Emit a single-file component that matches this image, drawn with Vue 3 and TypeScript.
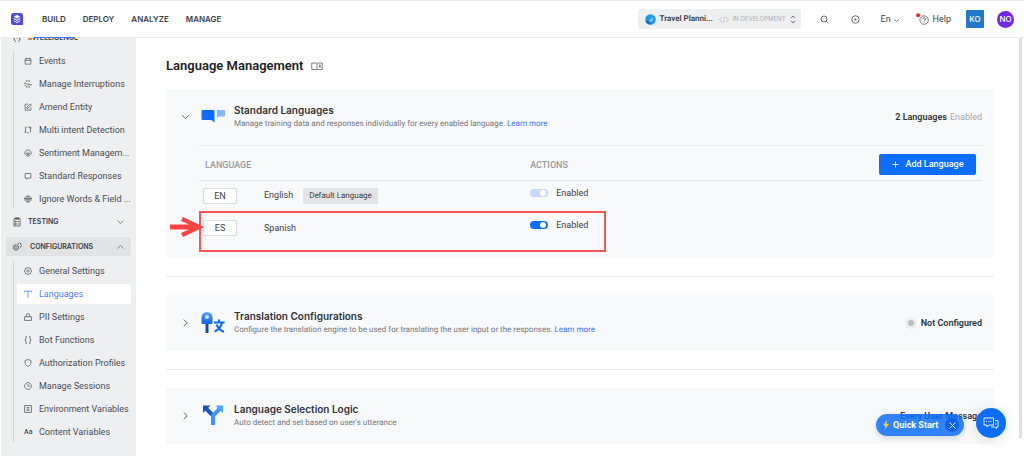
<script setup lang="ts">
import { ref } from 'vue'

interface NavItem {
  label: string
  icon: string
  active?: boolean
}

interface LanguageRow {
  code: string
  name: string
  isDefault: boolean
  enabled: boolean
}

const tabs = ['BUILD', 'DEPLOY', 'ANALYZE', 'MANAGE']

const intelligence: NavItem[] = [
  { label: 'Events', icon: 'M2 3h10v9.500H2zM2 6h10M4.500 1v2M9.500 1v2' },
  { label: 'Manage Interruptions', icon: 'M5 0v3.500M9 0v3.500M0 5.500h3.500l2 3H9M1 9.500h2.500M8 5.500l2 3h4M5 10.500V14M9 10.500V14' },
  { label: 'Amend Entity', icon: 'M7 2H2v10.500h10V8M5 9.500V7.500L11 1.500l1.800 1.800L7 9.500z' },
  { label: 'Multi intent Detection', icon: 'M5 2H2.500v9.500M1 10l1.500 1.800L4 10M7 2h4.500v9M10 4l1.500-2L13 4M9 12H5.500' },
  { label: 'Sentiment Managem...', icon: 'M7 1.500a5.500 5.500 0 1 0 .01 0M4.500 5.500h1.500M8 5.500h1.500M4.500 8c1 3 4 3 5 0z' },
  { label: 'Standard Responses', icon: 'M2 2.500h10v8H6.500l-2 2v-2H2z' },
  { label: 'Ignore Words & Field ...', icon: 'M7 1.500a5.500 5.500 0 1 0 .01 0M0 6h14M3 8.500h8M4 3.500h6M5 6v2.500M9 6v2.500M7 9v4' },
]

const configurations: NavItem[] = [
  { label: 'General Settings', icon: 'M7 .5l1.800 1.700 2.600-.2.400 2.500 1.700 2.500-1.700 2.500-.4 2.500-2.600-.2L7 13.500l-1.800-1.700-2.600.2-.4-2.500L.5 7l1.700-2.500.4-2.500 2.600.2zM7 5a2 2 0 1 0 .01 0' },
  { label: 'Languages', icon: 'M1 4V2h12v2M7 2v11.500', active: true },
  { label: 'PII Settings', icon: 'M1 6.500h12V13H1zM4 6.500V4a3 3 0 0 1 6 0v2.500' },
  { label: 'Bot Functions', icon: 'M5 .5H3.500v5L1.500 7l2 1.500v5H5M9 .5h1.500v5l2 1.500-2 1.500v5H9' },
  { label: 'Authorization Profiles', icon: 'M7 1L12 2.500v5C12 10.500 9 12 7 13 5 12 2 10.500 2 7.500v-5z' },
  { label: 'Manage Sessions', icon: 'M7 1a6 6 0 1 0 .01 0M7 3.500V7.500h3.500' },
  { label: 'Environment Variables', icon: 'M1 1h12v12H1zM4.500 4.500h5M4.500 7h5M4.500 9.500h5' },
  { label: 'Content Variables', icon: '' },
]

const languages = ref<LanguageRow[]>([
  { code: 'EN', name: 'English', isDefault: true, enabled: true },
  { code: 'ES', name: 'Spanish', isDefault: false, enabled: true },
])

const locale = ref('En')
const quickStart = ref(true)
</script>

<template>
  <div class="page">
    <header class="topbar">
      <svg class="logo" viewBox="0 0 26 26" aria-hidden="true">
        <path d="M5 0h16a5 5 0 0 1 5 5v21H5a5 5 0 0 1-5-5V5a5 5 0 0 1 5-5z" fill="#4f4be0" />
        <path d="M13 4l7 4-7 4-7-4z" fill="#fff" />
        <path d="M6 10.500l7 4 7-4v3l-7 4-7-4zM6 15.500l7 4 7-4v2.500l-7 4-7-4z" fill="#e4e4fb" />
      </svg>
      <nav class="tabs" aria-label="Main">
        <a v-for="tab in tabs" :key="tab" href="#" class="tab" :class="{ current: tab === 'BUILD' }">{{ tab }}</a>
      </nav>
      <div class="tools">
        <button class="app-picker" type="button" aria-haspopup="listbox">
          <svg class="app-icon" viewBox="0 0 22 22" aria-hidden="true">
            <circle cx="11" cy="11" r="10.500" fill="#2196f3" />
            <path d="M8 13l9-7-2 8-4 2z" fill="#90cdf9" />
            <path d="M1 14c4-2 9 0 12 6-5 2-10-1-12-6z" fill="#1769c0" />
          </svg>
          <span class="app-name">Travel Planni...</span>
          <svg class="code-icon" viewBox="0 0 20 14" aria-hidden="true"><path d="M6 2L1 7l5 5M14 2l5 5-5 5M11.500 1l-3 12" /></svg>
          <span class="stage">IN DEVELOPMENT</span>
          <svg class="updown" viewBox="0 0 12 18" aria-hidden="true"><path d="M2 6.500L6 2l4 4.500M2 11.500L6 16l4-4.500" /></svg>
        </button>
        <button class="icon-btn search" type="button" aria-label="Search">
          <svg viewBox="0 0 18 18"><circle cx="8" cy="8" r="6" /><path d="M12.500 12.500L16.500 16.500" /></svg>
        </button>
        <button class="icon-btn target" type="button" aria-label="Explore">
          <svg viewBox="0 0 18 18"><circle cx="9" cy="9" r="7.500" /><circle class="solid" cx="9" cy="9" r="2" /></svg>
        </button>
        <span class="locale">
          <select v-model="locale" aria-label="Interface language">
            <option>En</option>
            <option>Es</option>
          </select>
          <svg viewBox="0 0 10 6" aria-hidden="true"><path d="M1 1l4 4 4-4" /></svg>
        </span>
        <button class="help" type="button">
          <svg viewBox="0 0 24 22" aria-hidden="true">
            <circle cx="15" cy="13" r="7.800" />
            <path d="M12.500 11c0-3.500 5-3.500 5 0 0 2-2.500 2-2.500 3.800M15 16.500v1.500" />
            <circle class="alert" cx="4" cy="4" r="3.800" />
          </svg>
          Help
        </button>
        <button class="workspace" type="button">KO</button>
        <button class="avatar" type="button">NO</button>
      </div>
    </header>

    <div class="body">
      <aside class="sidebar">
        <div class="scrolled">
          <button class="group intel" type="button">
            <svg class="group-icon" viewBox="0 0 18 18"><path d="M4 2v11l3 3M14 2v11l-3 3M9 2v8" /></svg>
            <span>INTELLIGENCE</span>
          </button>
          <ul class="items">
            <li v-for="item in intelligence" :key="item.label">
              <a href="#" class="item">
                <svg viewBox="0 0 14 14" aria-hidden="true"><path :d="item.icon" /></svg>
                <span>{{ item.label }}</span>
              </a>
            </li>
          </ul>
          <button class="group" type="button">
            <svg class="group-icon" viewBox="0 0 18 20"><path d="M3 3h12v15H3zM6 1.500h6v3H6zM5.500 8h2v2h-2zM5.500 13h2v2h-2zM10 9h3M10 14h3" /></svg>
            <span>TESTING</span>
            <svg class="caret" viewBox="0 0 14 8"><path d="M1 1l6 6 6-6" /></svg>
          </button>
          <button class="group open" type="button">
            <svg class="group-icon" viewBox="0 0 20 20">
              <path d="M8 5l1.500 1.500 2-.2.500 2 1.800 1-.8 1.700.8 1.800-1.800 1-.5 2-2-.2L8 17l-1.500-1.400-2 .2-.5-2-1.800-1L3 11l-.8-1.800 1.800-1 .5-2 2 .2zM8 8.500a2.500 2.500 0 1 0 .01 0M11 4.500l1-2 1.500.5 1.500-1.500L16 3l2 .2v2l1.300 1.300L18 8l.2 2-2 .3" />
            </svg>
            <span>CONFIGURATIONS</span>
            <svg class="caret" viewBox="0 0 14 8"><path d="M1 7l6-6 6 6" /></svg>
          </button>
          <ul class="items config">
            <li v-for="item in configurations" :key="item.label">
              <a href="#" class="item" :class="{ active: item.active }">
                <svg v-if="item.icon" viewBox="0 0 14 14" aria-hidden="true"><path :d="item.icon" /></svg>
                <span v-else class="aa" aria-hidden="true">Aa</span>
                <span>{{ item.label }}</span>
              </a>
            </li>
          </ul>
        </div>
      </aside>

      <main class="main">
        <h1>
          Language Management
          <svg viewBox="0 0 24 18" aria-hidden="true"><path d="M12 4c-1-2-2-2-4-2H1.500v13H9c1.500 0 2.500.5 3 1.500.5-1 1.500-1.500 3-1.500h7.500V2H16c-2 0-3 0-4 2zM12 4v12M16 6h3M16 9h3M18 6v6" /></svg>
        </h1>

        <section class="panel">
          <div class="panel-head">
            <button class="toggle" type="button" aria-label="Collapse Standard Languages" aria-expanded="true">
              <svg viewBox="0 0 16 16"><path d="M2 4l6 6 6-6" /></svg>
            </button>
            <svg class="emblem" viewBox="0 0 48 48" aria-hidden="true">
              <path d="M3 10h22a2 2 0 0 1 2 2v23l-6-5H3a2 2 0 0 1-2-2V12a2 2 0 0 1 2-2z" fill="#0d6efd" />
              <path d="M33 10h13a2 2 0 0 1 2 2v9a2 2 0 0 1-2 2H36l-4 3V11z" fill="#86b6fe" />
            </svg>
            <div class="titles">
              <h2>Standard Languages</h2>
              <p>Manage training data and responses individually for every enabled language. <a href="#">Learn more</a></p>
            </div>
            <div class="status"><strong>2 Languages</strong> <span class="muted">Enabled</span></div>
          </div>
          <div class="panel-body">
            <table>
              <colgroup>
                <col class="c-code" />
                <col class="c-name" />
                <col />
                <col class="c-add" />
              </colgroup>
              <thead>
                <tr>
                  <th colspan="2" scope="col" class="first">LANGUAGE</th>
                  <th scope="col">ACTIONS</th>
                  <td class="add-cell">
                    <button class="add" type="button">
                      <svg viewBox="0 0 14 14" aria-hidden="true"><path d="M7 1v12M1 7h12" /></svg>
                      Add Language
                    </button>
                  </td>
                </tr>
              </thead>
              <tbody>
                <tr v-for="row in languages" :key="row.code">
                  <td class="code-cell">
                    <span class="code">{{ row.code }}</span>
                    <span v-if="row.code === 'ES'" class="frame" aria-hidden="true"></span>
                    <svg v-if="row.code === 'ES'" class="arrow" viewBox="0 0 34 20" aria-hidden="true">
                      <path d="M0 7.500h19l-8-3.500L13 0l21 10-21 10-2-4 8-3.500H0z" fill="#fb4343" />
                    </svg>
                  </td>
                  <td>
                    <span class="lang">{{ row.name }}</span>
                    <span v-if="row.isDefault" class="badge">Default Language</span>
                  </td>
                  <td colspan="2" class="switch-cell">
                    <label class="switch">
                      <input v-model="row.enabled" type="checkbox" :disabled="row.isDefault" />
                      <span>Enabled</span>
                    </label>
                  </td>
                </tr>
              </tbody>
            </table>
          </div>
        </section>

        <hr />

        <section class="panel">
          <div class="panel-head">
            <button class="toggle" type="button" aria-label="Expand Translation Configurations" aria-expanded="false">
              <svg viewBox="0 0 16 16"><path d="M5 1l6 6-6 6" /></svg>
            </button>
            <svg class="emblem" viewBox="0 0 48 48" aria-hidden="true">
              <defs>
                <linearGradient id="bulb" x1="0" y1="0" x2="0" y2="1">
                  <stop offset="0" stop-color="#5aa2ff" />
                  <stop offset="1" stop-color="#0d62f0" />
                </linearGradient>
              </defs>
              <path d="M9 26h6v18H9z" fill="#174a9c" />
              <path d="M1 13a11 11 0 0 1 22 0v11a2 2 0 0 1-2 2H3a2 2 0 0 1-2-2z" fill="url(#bulb)" />
              <circle cx="12" cy="12" r="4" fill="#d6e8ff" />
              <path d="M36 17v5M26 23h21M42 24c-2 8-8 14-15 17M31 27c3 7 8 12 15 15" fill="none" stroke="#0f67f5" stroke-width="4" />
            </svg>
            <div class="titles">
              <h2>Translation Configurations</h2>
              <p>Configure the translation engine to be used for translating the user input or the responses. <a href="#">Learn more</a></p>
            </div>
            <div class="status"><span class="dot"></span><strong>Not Configured</strong></div>
          </div>
        </section>

        <hr />

        <section class="panel">
          <div class="panel-head">
            <button class="toggle" type="button" aria-label="Expand Language Selection Logic" aria-expanded="false">
              <svg viewBox="0 0 16 16"><path d="M5 1l6 6-6 6" /></svg>
            </button>
            <svg class="emblem" viewBox="0 0 48 48" aria-hidden="true">
              <path d="M10 9l14 14v19" fill="none" stroke="#1557c0" stroke-width="8" />
              <path d="M4 3h15L4 18z" fill="#1557c0" />
              <path d="M38 9L24 23v19" fill="none" stroke="#3d94fb" stroke-width="8" />
              <path d="M44 3H29l15 15z" fill="#4ba3fd" />
            </svg>
            <div class="titles">
              <h2>Language Selection Logic</h2>
              <p>Auto detect and set based on user's utterance</p>
            </div>
            <div class="status"><strong>Every User Message</strong></div>
          </div>
        </section>
      </main>
    </div>

    <div class="scrollbar" aria-hidden="true"></div>

    <div class="floating">
      <div v-if="quickStart" class="quick">
        <button class="quick-open" type="button">
          <svg viewBox="0 0 12 20" aria-hidden="true"><path d="M8 0L0 11h5l-2 9 9-12H7z" fill="#ffd02e" /></svg>
          Quick Start
        </button>
        <button class="quick-close" type="button" aria-label="Dismiss Quick Start" @click="quickStart = false">
          <svg viewBox="0 0 14 14"><path d="M1 1l12 12M13 1L1 13" /></svg>
        </button>
      </div>
      <button class="chat" type="button" aria-label="Open chat">
        <svg viewBox="0 0 32 26">
          <path d="M2 2h19v14H12l-4 4v-4H2zM6 9h2M11 9h2M15 9h2" />
          <path d="M24 7h6v13h-3v3l-4-3h-7M24 14h3" />
        </svg>
      </button>
    </div>
  </div>
</template>

<style>
html,
body {
  margin: 0;
  background: #fff;
}
</style>

<style scoped>
.page {
  position: relative;
  display: flex;
  flex-direction: column;
  height: 100vh;
  overflow: hidden;
  font-family: Roboto, 'Liberation Sans', sans-serif;
  font-size: 9px;
  line-height: 12px;
  color: #3c4043;
}
.page * {
  box-sizing: border-box;
}
button,
select {
  border: 0;
  padding: 0;
  margin: 0;
  background: none;
  font: inherit;
  color: inherit;
  white-space: nowrap;
  cursor: pointer;
}
a {
  color: inherit;
  text-decoration: none;
}
svg {
  fill: none;
  flex: none;
  display: block;
}

/* Top bar */
.topbar {
  display: flex;
  align-items: center;
  flex: none;
  height: 38px;
  padding: 0 11px;
  border-top: 1px solid #ececec;
  border-bottom: 1px solid #ececec;
}
.logo {
  width: 12px;
  height: 12px;
}
.tabs {
  display: flex;
  align-self: stretch;
  margin: 0 0 -1px 11px;
}
.tab {
  display: flex;
  align-items: center;
  padding: 0 9px 0 8px;
  font-family: Inter, 'Liberation Sans', sans-serif;
  font-size: 8px;
  font-weight: 600;
  border-bottom: 1px solid transparent;
}
.tab.current {
  border-color: #2e7bf6;
}
.tools {
  display: flex;
  align-items: center;
  margin-left: auto;
  margin-right: -1px;
}
.app-picker {
  display: flex;
  align-items: center;
  height: 20px;
  width: 163px;
  padding: 0 5px 0 7px;
  border-radius: 2px;
  background: #eeeff1;
  font-size: 8px;
}
.app-icon {
  width: 11px;
  height: 11px;
}
.app-name {
  margin-left: 4px;
  font-weight: 600;
  text-rendering: geometricPrecision;
}
.code-icon {
  width: 10px;
  height: 7px;
  margin-left: auto;
  stroke: #b0b3b8;
  stroke-width: 1.5;
}
.stage {
  margin-left: 4px;
  font-family: Inter, 'Liberation Sans', sans-serif;
  font-size: 6px;
  font-weight: 500;
  color: #b4b7bb;
}
.updown {
  width: 6px;
  height: 9px;
  margin-left: 4px;
  stroke: #555;
  stroke-width: 1.6;
}
.icon-btn svg {
  width: 9px;
  height: 9px;
  stroke: #555;
  stroke-width: 1.7;
}
.icon-btn .solid {
  fill: #555;
  stroke: none;
}
.search {
  margin-left: 19px;
}
.target {
  margin-left: 22px;
}
.locale {
  display: flex;
  align-items: center;
  gap: 2px;
  margin-left: 21px;
}
.locale select {
  appearance: none;
  font-size: 9px;
}
.locale svg {
  width: 5px;
  height: 3px;
  margin-top: 3px;
  stroke: #555;
  stroke-width: 1.5;
}
.help {
  display: flex;
  align-items: center;
  gap: 4px;
  margin-left: 17px;
}
.help svg {
  width: 13px;
  height: 12px;
  margin-top: -1px;
  stroke: #666;
  stroke-width: 1.6;
}
.help .alert {
  fill: #e5262f;
  stroke: none;
}
.workspace,
.avatar {
  color: #fff;
  font-family: Inter, 'Liberation Sans', sans-serif;
  font-size: 8px;
  font-weight: 500;
}
.workspace {
  width: 18px;
  height: 18px;
  margin-left: 15px;
  border-radius: 1px;
  background: #2079c8;
}
.avatar {
  width: 17px;
  height: 17px;
  margin-left: 13px;
  border-radius: 50%;
  background: #7227e8;
}

/* Sidebar */
.body {
  display: flex;
  flex: 1;
  min-height: 0;
}
.sidebar {
  flex: none;
  width: 135px;
  margin-left: 1px;
  overflow: hidden;
  background: #edeff1;
}
.scrolled {
  margin-top: -12px;
  padding: 0 5px;
}
.group {
  display: flex;
  align-items: center;
  width: 100%;
  height: 19px;
  padding: 0 7px 0 6px;
  border-radius: 2px;
  font-family: Inter, 'Liberation Sans', sans-serif;
  font-size: 7px;
  font-weight: 600;
  text-align: left;
}
.group-icon {
  width: 10px;
  height: 10px;
  margin-right: 6px;
  stroke: #555;
  stroke-width: 1.7;
}
.group.intel {
  height: 23px;
}
.group.open {
  margin-top: 6px;
  background: #e1e3e5;
}
.group.open .group-icon {
  margin-right: 8px;
}
.caret {
  width: 7px;
  height: 4px;
  margin-left: auto;
  stroke: #777;
  stroke-width: 1.8;
}
.items {
  list-style: none;
  margin: 2px 0 0 7px;
  padding: 0 0 0 3px;
  border-left: 1px solid #d3d5d8;
}
.items.config {
  margin-top: 5px;
}
.item {
  display: flex;
  align-items: center;
  gap: 7px;
  height: 20px;
  margin-bottom: 3px;
  padding-left: 7px;
  border-radius: 2px;
  white-space: nowrap;
  color: #4a4d52;
}
.item svg {
  width: 8px;
  height: 8px;
  stroke: #5d6065;
  stroke-width: 1.4;
}
.item.active {
  background: #fff;
  color: #4f7df9;
}
.item.active svg {
  stroke: #4f7df9;
}
.aa {
  width: 8px;
  font-size: 7px;
  font-weight: 500;
}

/* Main */
.main {
  flex: 1;
  min-width: 0;
  padding: 20px 30px 0;
}
h1 {
  display: flex;
  align-items: center;
  gap: 8px;
  margin: 0 0 15px;
  font-size: 13px;
  line-height: 16px;
  font-weight: 600;
  color: #202124;
}
h1 svg {
  width: 12px;
  height: 9px;
  stroke: #666;
  stroke-width: 1.7;
}
.panel {
  border-radius: 3px;
  background: #f8f9fb;
}
.panel-head {
  display: flex;
  align-items: center;
  height: 56px;
  padding: 0 12px 0 15px;
}
.toggle svg {
  width: 9px;
  height: 9px;
  stroke: #555;
  stroke-width: 1.6;
}
.emblem {
  width: 24px;
  height: 24px;
  margin: 0 9px 0 11px;
}
.titles {
  flex: 1;
}
h2 {
  margin: 0 0 2px;
  font-family: Inter, 'Liberation Sans', sans-serif;
  font-size: 10px;
  line-height: 12px;
  font-weight: 600;
  color: #303338;
}
p {
  margin: 0;
  font-size: 8px;
  line-height: 12px;
  text-rendering: geometricPrecision;
  color: #75787e;
}
p a {
  color: #3d74fb;
}
.status {
  display: flex;
  align-items: center;
  gap: 3px;
  white-space: nowrap;
}
.status strong {
  font-weight: 600;
  color: #303338;
}
.muted {
  color: #a5a8ad;
}
.dot {
  width: 12px;
  height: 12px;
  margin-right: 1px;
  border: 3px solid #ebedef;
  border-radius: 50%;
  background: #bcbec2;
}
.panel-body {
  margin: 0 12px 0 33px;
  padding-bottom: 14px;
  border-top: 1px solid #e8eaec;
}
table {
  width: 100%;
  table-layout: fixed;
  border-collapse: collapse;
}
.c-code {
  width: 65px;
}
.c-name {
  width: 34%;
}
.c-add {
  width: 110px;
}
th {
  padding: 4px 0 0;
  text-align: left;
  font-weight: 500;
  color: #96999e;
}
th.first {
  padding-left: 6px;
}
thead tr {
  height: 34px;
  border-bottom: 1px solid #dfe1e3;
}
td {
  padding: 0;
}
.add-cell {
  padding: 3px 6px 0 0;
}
.add {
  display: flex;
  align-items: center;
  justify-content: center;
  gap: 7px;
  width: 97px;
  height: 21px;
  margin-left: auto;
  border-radius: 2px;
  background: #0d6efd;
  color: #fff;
  font-weight: 500;
}
.add svg {
  width: 7px;
  height: 7px;
  stroke: #fff;
  stroke-width: 1.8;
}
tbody tr {
  height: 32px;
}
.code-cell {
  position: relative;
  padding-left: 4px;
}
.code {
  display: block;
  width: 34px;
  height: 16px;
  border: 1px solid #dcdee1;
  border-radius: 2px;
  background: #fff;
  line-height: 14px;
  text-align: center;
}
.badge {
  display: inline-block;
  margin-left: 10px;
  padding: 2px 6px;
  border-radius: 1px;
  background: #e3e4e6;
  font-size: 8px;
  text-rendering: geometricPrecision;
}
.switch-cell {
  padding-bottom: 6px;
}
.switch {
  display: inline-flex;
  align-items: center;
  gap: 8px;
}
.switch input {
  appearance: none;
  width: 18px;
  height: 8px;
  margin: 0;
  padding: 1px;
  border-radius: 4px;
  background: #0d6efd;
}
.switch input::after {
  content: '';
  display: block;
  width: 6px;
  height: 6px;
  margin-left: auto;
  margin-right: 1px;
  border-radius: 50%;
  background: #fff;
}
.switch input:disabled {
  background: #c5dafc;
}
.frame {
  position: absolute;
  top: -1px;
  left: 0;
  width: 407px;
  height: 41px;
  border: 2px solid #f95555;
  pointer-events: none;
}
.arrow {
  position: absolute;
  left: -29px;
  top: 5px;
  width: 34px;
  height: 20px;
}
hr {
  margin: 18px 0;
  border: 0;
  border-top: 1px solid #ebebed;
}

/* Overlays */
.scrollbar {
  position: absolute;
  top: 38px;
  right: 2px;
  bottom: 18px;
  width: 3px;
  background: #e0e0e0;
}
.floating {
  position: absolute;
  right: 18px;
  bottom: 18px;
  display: flex;
  align-items: flex-end;
  gap: 12px;
}
.quick {
  display: flex;
  align-items: center;
  justify-content: space-between;
  width: 88px;
  height: 22px;
  margin-bottom: 2px;
  padding: 0 5px 0 7px;
  border-radius: 11px;
  background: rgba(13, 110, 253, 0.85);
  box-shadow: 0 2px 6px rgba(0, 0, 0, 0.15);
  color: #fff;
}
.quick-open {
  display: flex;
  align-items: center;
  gap: 4px;
  font-weight: 700;
}
.quick-open svg {
  width: 6px;
  height: 10px;
}
.quick-close {
  display: flex;
  align-items: center;
  justify-content: center;
  width: 14px;
  height: 14px;
  border-radius: 50%;
  background: #0d62ec;
}
.quick-close svg {
  width: 7px;
  height: 7px;
  stroke: #fff;
  stroke-width: 1.8;
}
.chat {
  display: flex;
  align-items: center;
  justify-content: center;
  width: 30px;
  height: 30px;
  border-radius: 50%;
  background: #0d6efd;
  box-shadow: 0 2px 14px rgba(0, 0, 0, 0.12);
}
.chat svg {
  width: 16px;
  height: 13px;
  stroke: #fff;
  stroke-width: 1.8;
}
</style>
